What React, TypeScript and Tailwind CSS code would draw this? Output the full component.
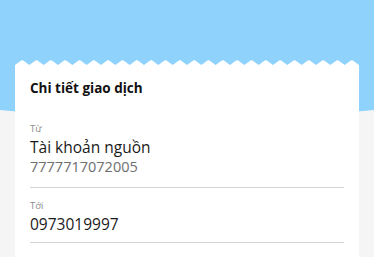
const teeth = 24;
const cardW = 344;

function Zigzag() {
  const step = cardW / teeth;
  let d = "M0 6 L0 5";
  for (let i = 0; i < teeth; i++) {
    const x0 = i * step;
    d += ` L${x0 + step / 2 - 1} 0.6 Q${x0 + step / 2} 0 ${x0 + step / 2 + 1} 0.6 L${x0 + step} 5`;
  }
  d += ` L${cardW} 6 Z`;
  return (
    <svg width={cardW} height="6" viewBox={`0 0 ${cardW} 6`} className="block">
      <path d={d} fill="#ffffff" />
    </svg>
  );
}

export default function App() {
  return (
    <div className="h-[257px] w-[374px] overflow-hidden bg-[#f5f5f5] font-['Open_Sans',sans-serif]">
      <div className="h-[118px] w-[748px] -ml-[187px] rounded-b-[50%] bg-[#8fd3fd]" />
      <div className="mx-[15px] -mt-[58px] w-[344px]">
        <Zigzag />
        <div className="bg-white px-[15px] pt-[13px]">
          <div className="text-[13.5px] leading-[18px] font-bold text-[#111]">Chi tiết giao dịch</div>
          <div className="mt-[25px] border-b border-[#d4d4d4] pb-[12px]">
            <div className="text-[9.5px] leading-[14px] text-[#8a8a8a]">Từ</div>
            <div className="text-[15.5px] leading-[16px] text-[#1a1a1a] mt-[3px]">Tài khoản nguồn</div>
            <div className="text-[14.5px] leading-[16px] text-[#6e6e6e] mt-[4px]">7777717072005</div>
          </div>
          <div className="border-b border-[#d4d4d4] pt-[11px] pb-[10px]">
            <div className="text-[9.5px] leading-[14px] text-[#8a8a8a]">Tới</div>
            <div className="text-[15.5px] leading-[16px] text-[#1a1a1a] mt-[3px]">0973019997</div>
          </div>
          <div className="pt-[11px]">
            <div className="text-[9.5px] leading-[14px] text-[#8a8a8a]">Nội dung</div>
            <div className="text-[15.5px] leading-[16px] text-[#1a1a1a] mt-[2px]">Chuyển tiền</div>
          </div>
        </div>
      </div>
    </div>
  );
}
